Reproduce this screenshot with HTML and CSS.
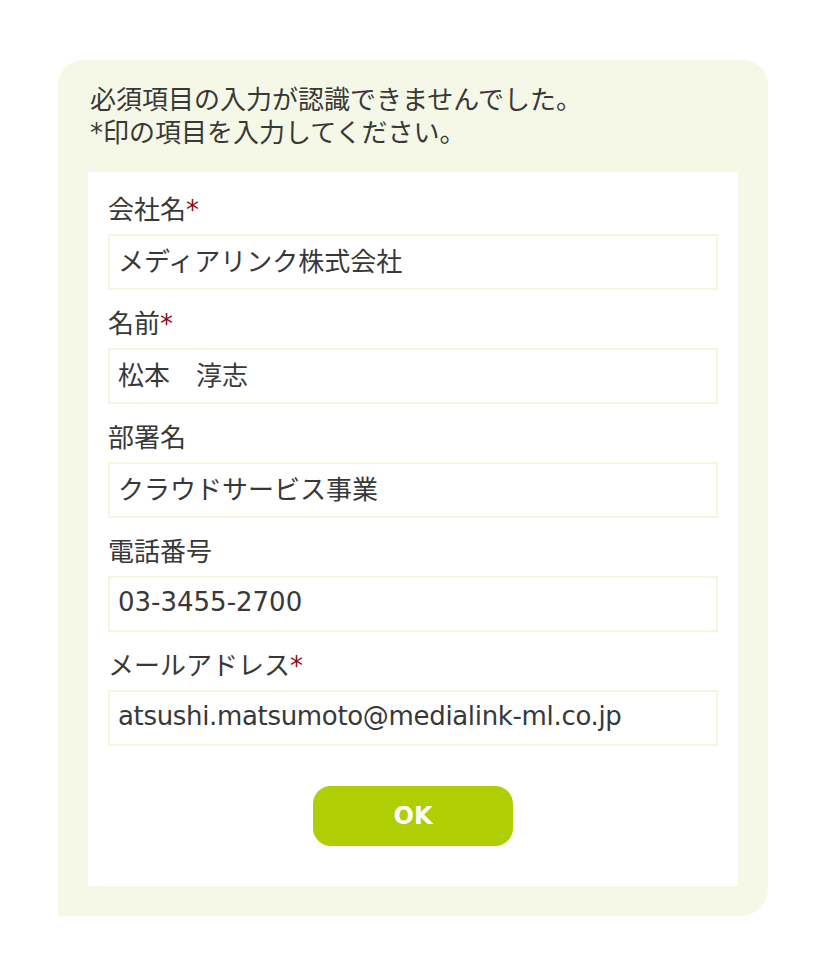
FILE: index.html
```html
<!DOCTYPE html>
<html lang="ja">
<head>
<meta charset="utf-8">
<title>入力エラー</title>
<link rel="stylesheet" href="styles.css">
</head>
<body>
<div class="card">
  <p class="message">必須項目の入力が認識できませんでした。<br>*印の項目を入力してください。</p>
  <form class="form">
    <div class="field">
      <label class="label">会社名<span class="req">*</span></label>
      <input class="input" type="text" value="メディアリンク株式会社">
    </div>
    <div class="field">
      <label class="label">名前<span class="req">*</span></label>
      <input class="input" type="text" value="松本　淳志">
    </div>
    <div class="field">
      <label class="label">部署名</label>
      <input class="input" type="text" value="クラウドサービス事業">
    </div>
    <div class="field">
      <label class="label">電話番号</label>
      <input class="input" type="text" value="03-3455-2700">
    </div>
    <div class="field">
      <label class="label">メールアドレス<span class="req">*</span></label>
      <input class="input input-latin" type="text" value="atsushi.matsumoto@medialink-ml.co.jp">
    </div>
    <div class="actions">
      <button class="ok" type="button">OK</button>
    </div>
  </form>
</div>
</body>
</html>
```

FILE: styles.css
```css
* { box-sizing: border-box; }
html, body {
  margin: 0;
  padding: 0;
  background: #ffffff;
}
body {
  font-family: "DejaVu Sans", "Noto Sans CJK JP", sans-serif;
  color: #383838;
  font-size: 26px;
  line-height: 33px;
  padding: 60px 0 0 58px;
}
.card {
  width: 710px;
  background: #f6f8e7;
  border-radius: 25px 25px 27px 0;
  padding: 24px 30px 30px 30px;
}
.message {
  margin: 0 0 22px 2px;
  font-size: 26px;
  line-height: 33px;
}
.form {
  background: #ffffff;
  padding: 22px 20px 40px 20px;
}
.field {
  display: flex;
  flex-direction: column;
  gap: 7px;
  margin-bottom: 18px;
}
.field:last-of-type { margin-bottom: 0; }
.label {
  display: block;
  line-height: 33px;
}
.req {
  color: #8e0d0d;
}
.input {
  display: block;
  width: 100%;
  height: 56px;
  border: 2px solid #f3f6e1;
  border-radius: 0;
  padding: 0 8px 5px 8px;
  background: #ffffff;
  font-family: "DejaVu Sans", "Noto Sans CJK JP", sans-serif;
  font-size: 26px;
  color: #383838;
  outline: none;
}
.input-latin {
  letter-spacing: -0.33px;
}
.actions {
  display: flex;
  justify-content: center;
  margin-top: 40px;
}
.ok {
  width: 200px;
  height: 60px;
  border: none;
  border-radius: 18px;
  background: #afce04;
  color: #ffffff;
  font-family: "DejaVu Sans", sans-serif;
  font-weight: bold;
  font-size: 24px;
  cursor: pointer;
  padding: 0;
}
```
